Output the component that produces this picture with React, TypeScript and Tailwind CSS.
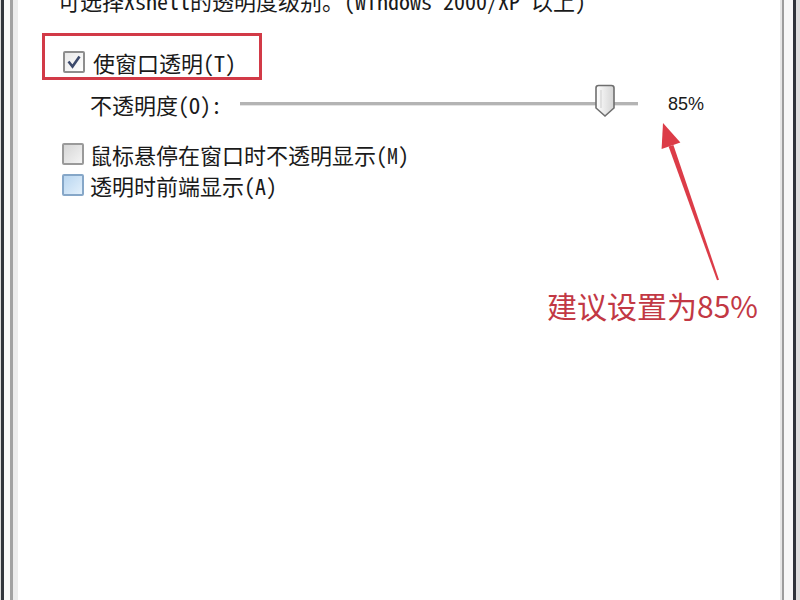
import React from 'react';

const cjk = '"Noto Sans Mono CJK SC", "Noto Sans CJK SC", "Liberation Mono", monospace';

function EdgeLeft() {
  return (
    <div className="flex h-full shrink-0">
      <div className="w-[1px] bg-[#d8d8d8]" />
      <div className="w-[3px] bg-[#2f333a]" />
      <div className="w-[6px] bg-[#f7f7f7]" />
      <div className="w-[3px] bg-[#a2a2a2]" />
      <div className="w-[5px] bg-[#ececec]" />
    </div>
  );
}

function EdgeRight() {
  return (
    <div className="flex h-full shrink-0">
      <div className="w-[2px] bg-[#e6e6e6]" />
      <div className="w-[2px] bg-[#9c9c9c]" />
      <div className="w-[9px] bg-[#f7f7f7]" />
      <div className="w-[3px] bg-[#2f333a]" />
      <div className="w-[4px] bg-[#dcdcdc]" />
    </div>
  );
}

function Checkbox({ checked, tone }: { checked?: boolean; tone: 'white' | 'gray' | 'blue' }) {
  const fill =
    tone === 'blue'
      ? 'bg-gradient-to-br from-[#b9d6f0] to-[#e3f0fb] border-[#86a7c8]'
      : tone === 'gray'
        ? 'bg-gradient-to-br from-[#d6d6d6] to-[#f4f4f4] border-[#9a9a9a]'
        : 'bg-gradient-to-br from-[#e9e9e9] to-[#ffffff] border-[#8e8e8e]';
  return (
    <div className={`w-[22px] h-[22px] shrink-0 border-[2px] rounded-[2px] flex items-center justify-center ${fill}`}>
      {checked && (
        <svg width="16" height="16" viewBox="0 0 16 16">
          <path d="M2.5 7.5 L6.5 12.5 L13.5 2.5" fill="none" stroke="#3c4a6c" strokeWidth="2.6" />
        </svg>
      )}
    </div>
  );
}

function SliderThumb() {
  return (
    <svg width="22" height="34" viewBox="0 0 22 34">
      <defs>
        <linearGradient id="thumb" x1="0" y1="0" x2="1" y2="0">
          <stop offset="0" stopColor="#ffffff" />
          <stop offset="1" stopColor="#d4d4d4" />
        </linearGradient>
      </defs>
      <path d="M2 4 Q2 1.5 4.5 1.5 H17.5 Q20 1.5 20 4 V24 L11 32 L2 24 Z" fill="url(#thumb)" stroke="#6f6f6f" strokeWidth="1.6" />
      <path d="M7 6 V24" stroke="#e0e0e0" strokeWidth="2" />
    </svg>
  );
}

export default function App() {
  return (
    <div className="relative w-[800px] h-[600px] overflow-hidden bg-white flex text-[#1a1a1a]">
      <EdgeLeft />
      <div className="flex-1 flex flex-col" style={{ fontFamily: cjk }}>
        <p className="mt-[-11px] ml-[40px] text-[22px] leading-[22px] whitespace-nowrap">
          可选择Xshell的透明度级别。(Windows 2000/XP 以上)
        </p>

        <div className="mt-[22px] ml-[24px] w-[220px] h-[47px] border-[3px] border-[#d23a47] flex items-end pb-[4px] pl-[18px] gap-[8px]">
          <Checkbox checked tone="white" />
          <span className="text-[22px] leading-[22px] whitespace-nowrap">使窗口透明(T)</span>
        </div>

        <div className="mt-[6px] ml-[72px] flex items-center h-[36px]">
          <span className="text-[22px] leading-[22px] w-[150px] whitespace-nowrap">不透明度(O):</span>
          <div className="relative w-[398px] h-[36px] flex items-center">
            <div className="w-full h-[4px] bg-[#b4b4b4] border-b border-[#e4e4e4]" />
            <div className="absolute left-[354px] top-[-2px]">
              <SliderThumb />
            </div>
          </div>
          <span className="ml-[30px] text-[18px] leading-[20px]" style={{ fontFamily: '"Liberation Sans", Arial, sans-serif' }}>
            85%
          </span>
        </div>

        <div className="mt-[21px] ml-[44px] flex flex-col gap-[9px]">
          <div className="flex items-center gap-[6px]">
            <Checkbox tone="gray" />
            <span className="text-[22px] leading-[22px] whitespace-nowrap">鼠标悬停在窗口时不透明显示(M)</span>
          </div>
          <div className="flex items-center gap-[6px]">
            <Checkbox tone="blue" />
            <span className="text-[22px] leading-[22px] whitespace-nowrap">透明时前端显示(A)</span>
          </div>
        </div>

        <p
          className="mt-[92px] ml-[529px] text-[30px] leading-[34px] text-[#c23844] whitespace-nowrap"
          style={{ fontFamily: '"Noto Sans CJK SC", sans-serif' }}
        >
          建议设置为85%
        </p>
      </div>
      <EdgeRight />

      <svg className="absolute left-[640px] top-[115px]" width="100" height="175" viewBox="0 0 100 175">
        <polygon points="23,8 21.6,34 40.4,27.4" fill="#dc3c48" />
        <polygon points="28.6,31.5 33.4,29.9 79,164.7 77,165.3" fill="#dc3c48" />
      </svg>
    </div>
  );
}
